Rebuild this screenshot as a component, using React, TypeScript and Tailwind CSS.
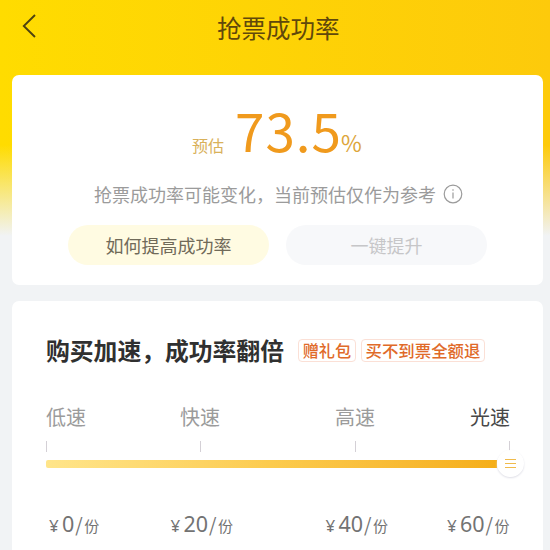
const speeds = [
  { name: "低速", place: "ml-[46px]", tone: "text-[#9b9b9b]" },
  { name: "快速", place: "ml-[94px]", tone: "text-[#9b9b9b]" },
  { name: "高速", place: "ml-[115px]", tone: "text-[#9b9b9b]" },
  { name: "光速", place: "ml-[95px]", tone: "text-[#484848]" },
];

const prices = [
  { amount: "0", place: "w-[121.5px]" },
  { amount: "20", place: "w-[155px]" },
  { amount: "40", place: "w-[121.5px]" },
  { amount: "60", place: "w-[80px]" },
];

function Header() {
  return (
    <header className="flex h-[75px] items-start">
      <svg className="ml-[21px] mt-[13px] h-[26px] w-[16px] shrink-0" viewBox="0 0 16 26" fill="none" stroke="#4d4210" strokeWidth="1.9">
        <path d="M14 2 2.8 13 14 24" />
      </svg>
      <h1 className="ml-[180px] mt-[10px] text-[24.5px] leading-[36px] text-[#60480b] whitespace-nowrap">抢票成功率</h1>
    </header>
  );
}

function Estimate() {
  return (
    <section className="ml-[12px] h-[210px] w-[531px] rounded-[7px] bg-white pt-[21px]">
      <div className="flex h-[72px] items-baseline pl-[180px] leading-[66px] whitespace-nowrap">
        <span className="text-[16px] text-[#d9b15a]">预估</span>
        <span className="ml-[11px] text-[53px] tracking-[1px] text-[#f09a1d]">73.5</span>
        <span className="ml-[-1px] text-[22.5px] text-[#dda63b]">%</span>
      </div>
      <div className="flex h-[51px] items-center pl-[82px]">
        <span className="text-[18px] leading-[26px] text-[#9b9b9b] whitespace-nowrap">抢票成功率可能变化，当前预估仅作为参考</span>
        <svg className="ml-[7px] h-[20px] w-[20px] shrink-0" viewBox="0 0 20 20" fill="none" stroke="#9b9b9b" strokeWidth="1.2">
          <circle cx="10" cy="10" r="8.8" />
          <path d="M10 8.5v6M10 5.3v1.5" />
        </svg>
      </div>
      <div className="flex gap-[17px] pl-[56px] pt-[6px] text-[18px]">
        <button className="h-[40px] w-[201px] rounded-full bg-[#fffbe2] leading-[40px] text-[#706a59]">如何提高成功率</button>
        <button className="h-[40px] w-[201px] rounded-full bg-[#f7f8fa] leading-[40px] text-[#c6c6c8]">一键提升</button>
      </div>
    </section>
  );
}

function Speedup() {
  return (
    <section className="ml-[12px] mt-[16px] h-[249px] w-[531px] rounded-t-[7px] bg-white">
      <div className="flex h-[98px] items-center pl-[34px] whitespace-nowrap">
        <h2 className="text-[23.8px] font-bold leading-[36px] text-[#303030]">购买加速，成功率翻倍</h2>
        <span className="ml-[14px] h-[23px] w-[58px] rounded-[4px] border border-[#fbe0d6] text-center text-[16.2px] font-medium leading-[21px] text-[#e06a29]">赠礼包</span>
        <span className="ml-[5px] h-[23px] w-[124px] rounded-[4px] border border-[#fbe0d6] text-center text-[16.4px] font-medium leading-[21px] text-[#e06a29]">买不到票全额退</span>
      </div>
      <div className="-ml-[12px] flex h-[36px] items-center text-[20px] leading-[30px]">
        {speeds.map((s) => (
          <span key={s.name} className={`w-10 whitespace-nowrap ${s.place} ${s.tone}`}>{s.name}</span>
        ))}
      </div>
      <div className="ml-[34px] mt-[6px] flex w-[464px] justify-between">
        {speeds.map((s) => (
          <span key={s.name} className="h-[11px] w-px bg-[#d4d0d6]" />
        ))}
      </div>
      <div className="ml-[34px] mt-[-2px] flex h-[27px] items-center">
        <div className="h-[8px] w-[451px] rounded-l-[2px] bg-gradient-to-r from-[#ffe58a] via-[#fccb4d] to-[#f5ae17]" />
        <div className="flex h-[27px] w-[27px] flex-col items-center justify-center gap-[3px] rounded-full bg-white shadow-[0_1px_2px_#dedee6]">
          <i className="h-px w-[11px] bg-[#f0bb4c]" />
          <i className="h-px w-[11px] bg-[#f0bb4c]" />
          <i className="h-px w-[11px] bg-[#f0bb4c]" />
        </div>
      </div>
      <div className="mt-[30px] flex pl-[37px] text-[#737373]">
        {prices.map((p) => (
          <div key={p.amount} className={`flex items-baseline leading-[34px] whitespace-nowrap ${p.place}`}>
            <span className="w-[13px] font-['Noto_Sans'] text-[17px]">¥</span>
            <span className="font-['Noto_Sans'] text-[21.5px]">{p.amount}</span>
            <span className="ml-[1px] text-[19px]">/</span>
            <span className="ml-[1.5px] text-[15px]">份</span>
          </div>
        ))}
      </div>
    </section>
  );
}

export default function App() {
  return (
    <main className="h-[550px] w-[550px] overflow-hidden bg-[#f1f3f5] font-['Noto_Sans_CJK_SC',sans-serif]">
      <div className="h-full bg-[linear-gradient(to_bottom,transparent_0,transparent_145px,#f1f3f5_236px),linear-gradient(to_right,#ffdc00,#fdca0b)]">
        <Header />
        <Estimate />
        <Speedup />
      </div>
    </main>
  );
}
